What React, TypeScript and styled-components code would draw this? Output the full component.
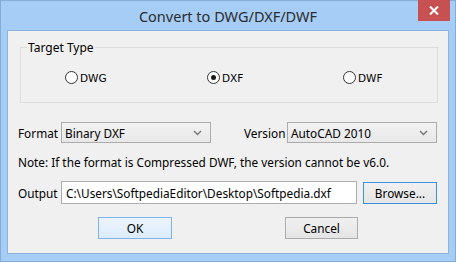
import React from "react";
import styled, { createGlobalStyle } from "styled-components";

const Global = createGlobalStyle`
  html, body { margin: 0; padding: 0; background: #a5cdf4; }
  * { box-sizing: border-box; }
`;

const Window = styled.div`
  width: 456px;
  height: 262px;
  background: #a6cdf5;
  border: 1px solid #86acd6;
  display: flex;
  flex-direction: column;
  font-family: "Noto Sans", "Open Sans", sans-serif;
  font-size: 11.8px;
  color: #000;
`;

const TitleBar = styled.div`
  position: relative;
  height: 29px;
  display: flex;
  align-items: center;
  justify-content: center;
`;

const Title = styled.div`
  font-size: 14.5px;
  color: #2b2b2b;
  margin-top: 1px;
`;

const CloseBtn = styled.div`
  position: absolute;
  top: -1px;
  right: 5px;
  width: 32px;
  height: 21px;
  background: #c75050;
  display: flex;
  align-items: center;
  justify-content: center;
`;

const Client = styled.div`
  margin: 0 6px 7px 6px;
  flex: 1;
  background: #f0f0f0;
  border: 1px solid #8db2dc;
  display: flex;
  flex-direction: column;
`;

const Group = styled.fieldset`
  margin: 9px 10px 0 12px;
  padding: 0;
  border: 1px solid #dcdcdc;
  height: 63px;
`;

const Legend = styled.legend`
  margin-left: 6px;
  padding: 0 1px;
  font-size: 12px;
  line-height: 15px;
`;

const RadioRow = styled.div`
  display: grid;
  grid-template-columns: 142px 136px auto;
  padding-left: 44px;
  margin-top: 16px;
`;

const RadioItem = styled.label`
  display: flex;
  align-items: center;
  gap: 2px;
  font-family: "DejaVu Sans", "Liberation Sans", sans-serif;
  font-size: 10.5px;
  color: #000;
`;

const RadioCircle = styled.span<{ $checked?: boolean }>`
  width: 13px;
  height: 13px;
  border-radius: 50%;
  border: 1px solid #333;
  background: #fff;
  display: flex;
  align-items: center;
  justify-content: center;
  &::after {
    content: "";
    width: 5px;
    height: 5px;
    border-radius: 50%;
    background: ${(p) => (p.$checked ? "#1a1a1a" : "transparent")};
  }
`;

const Row = styled.div<{ $mt: number; $pl?: number }>`
  display: flex;
  align-items: center;
  margin-top: ${(p) => p.$mt}px;
  padding-left: ${(p) => p.$pl ?? 10}px;
`;

const Label = styled.span<{ $w: number; $ml?: number }>`
  width: ${(p) => p.$w}px;
  margin-left: ${(p) => p.$ml ?? 0}px;
  flex-shrink: 0;
`;

const Select = styled.div<{ $w: number }>`
  width: ${(p) => p.$w}px;
  height: 21px;
  border: 1px solid #acacac;
  background: linear-gradient(#f2f2f2, #e8e8e8);
  display: flex;
  align-items: center;
  justify-content: space-between;
  padding: 0 8px 0 3px;
`;

const Note = styled.div`
  margin-top: 11px;
  padding-left: 10px;
`;

const Input = styled.div`
  width: 296px;
  height: 23px;
  background: #fff;
  border: 1px solid #abadb3;
  display: flex;
  align-items: center;
  padding-left: 4px;
`;

const Button = styled.div<{ $w: number; $kind?: "default" | "focus" | "plain"; $ml?: number }>`
  width: ${(p) => p.$w}px;
  height: 22px;
  margin-left: ${(p) => p.$ml ?? 0}px;
  display: flex;
  align-items: center;
  justify-content: center;
  border: 1px solid
    ${(p) => (p.$kind === "default" ? "#7eb4ea" : p.$kind === "focus" ? "#3c8ee0" : "#acacac")};
  background: ${(p) =>
    p.$kind === "default" ? "linear-gradient(#ecf4fc, #dcecfc)" : "linear-gradient(#f0f0f0, #e5e5e5)"};
`;

const Chevron = () => (
  <svg width="9" height="6" viewBox="0 0 9 6">
    <polyline points="1,1 4.5,4.5 8,1" fill="none" stroke="#7a7a7a" strokeWidth="1.5" />
  </svg>
);

export default function App() {
  return (
    <>
      <Global />
      <Window>
        <TitleBar>
          <Title>Convert to DWG/DXF/DWF</Title>
          <CloseBtn>
            <svg width="10" height="9" viewBox="0 0 10 9">
              <path d="M1 0.5 L9 8.5 M9 0.5 L1 8.5" stroke="#fff" strokeWidth="2" />
            </svg>
          </CloseBtn>
        </TitleBar>
        <Client>
          <Group>
            <Legend>Target Type</Legend>
            <RadioRow>
              <RadioItem>
                <RadioCircle />
                DWG
              </RadioItem>
              <RadioItem>
                <RadioCircle $checked />
                DXF
              </RadioItem>
              <RadioItem>
                <RadioCircle />
                DWF
              </RadioItem>
            </RadioRow>
          </Group>
          <Row $mt={19}>
            <Label $w={43}>Format</Label>
            <Select $w={150}>
              <span>Binary DXF</span>
              <Chevron />
            </Select>
            <Label $w={43} $ml={33}>Version</Label>
            <Select $w={150}>
              <span>AutoCAD 2010</span>
              <Chevron />
            </Select>
          </Row>
          <Note>Note: If the format is Compressed DWF, the version cannot be v6.0.</Note>
          <Row $mt={11}>
            <Label $w={43}>Output</Label>
            <Input>C:\Users\SoftpediaEditor\Desktop\Softpedia.dxf</Input>
            <Button $w={74} $kind="focus" $ml={6}>Browse...</Button>
          </Row>
          <Row $mt={13} $pl={90}>
            <Button $w={74} $kind="default">OK</Button>
            <Button $w={73} $ml={113}>Cancel</Button>
          </Row>
        </Client>
      </Window>
    </>
  );
}
